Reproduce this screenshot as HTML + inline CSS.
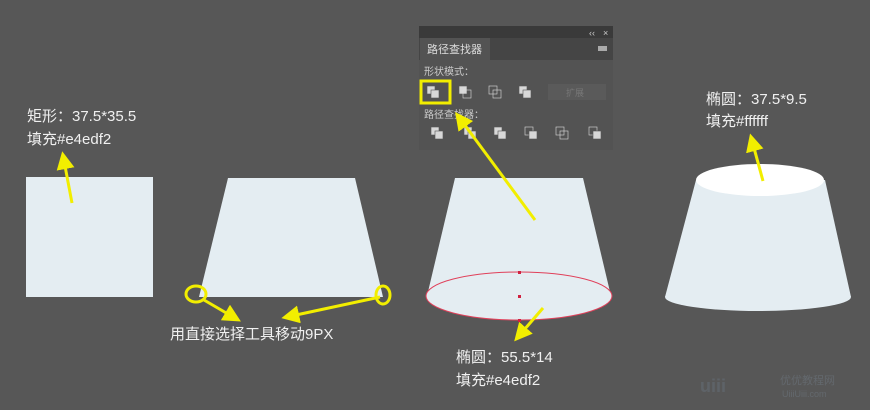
<!DOCTYPE html>
<html><head><meta charset="utf-8"><style>
html,body{margin:0;padding:0;background:#575757;width:870px;height:410px;overflow:hidden}
svg{display:block}
text{font-family:"Liberation Sans","Noto Sans CJK SC",sans-serif;fill:#f0f0f0;font-size:15px}
</style></head><body>
<svg width="870" height="410" viewBox="0 0 870 410">
<defs>
<marker id="ah" markerWidth="6" markerHeight="6" refX="1" refY="3" orient="auto" markerUnits="strokeWidth">
<path d="M0,0 L6,3 L0,6 Z" fill="#f2ee00"/></marker>
</defs>
<rect width="870" height="410" fill="#575757"/>
<rect x="26" y="177" width="127" height="120" fill="#e4edf2"/>
<polygon points="228,178 355,178 383,297 199,297" fill="#e4edf2"/>
<polygon points="455,178 583,178 611,296 427,296" fill="#e4edf2"/>
<ellipse cx="519" cy="296" rx="93" ry="24" fill="#e4edf2" stroke="#e0405a" stroke-width="1"/>
<rect x="518" y="271" width="3" height="3" fill="#d02040"/>
<rect x="518" y="295" width="3" height="3" fill="#d02040"/>
<rect x="518" y="319" width="3" height="3" fill="#d02040"/>
<polygon points="696,180 825,180 851,297 665,297" fill="#e4edf2"/>
<ellipse cx="758" cy="297" rx="93" ry="14" fill="#e4edf2"/>
<ellipse cx="760" cy="180" rx="64" ry="16" fill="#ffffff"/>
<rect x="419" y="26" width="194" height="124" fill="#535353"/>
<rect x="419" y="26" width="194" height="12" fill="#3a3a3a"/>
<rect x="419" y="38" width="194" height="22" fill="#454545"/>
<rect x="420" y="38" width="70" height="22" fill="#535353"/>
<text x="589" y="36" style="font-size:9px;fill:#ccc">‹‹</text>
<text x="603" y="36" style="font-size:9px;fill:#ccc">×</text>
<rect x="598" y="46" width="9" height="5" fill="#aaa"/>
<text x="427" y="53" style="font-size:11px;fill:#ddd">路径查找器</text>
<text x="424" y="75" style="font-size:10px;fill:#ccc">形状模式：</text>
<text x="424" y="118" style="font-size:10px;fill:#ccc">路径查找器：</text>
<rect x="548" y="84" width="58" height="16" fill="#5a5a5a"/>
<text x="566" y="96" style="font-size:9px;fill:#777">扩展</text>
<g fill="#d8d8d8" stroke="#555" stroke-width="0.6">
<rect x="427" y="86" width="8" height="8"/><rect x="431" y="90" width="8" height="8"/>
<rect x="459" y="86" width="8" height="8"/><rect x="463" y="90" width="8" height="8" fill="none" stroke="#ddd"/>
<rect x="489" y="86" width="8" height="8" fill="none" stroke="#ddd"/><rect x="493" y="90" width="8" height="8" fill="none" stroke="#ddd"/>
<rect x="519" y="86" width="8" height="8"/><rect x="523" y="90" width="8" height="8"/>
<rect x="431" y="127" width="8" height="8"/><rect x="435" y="131" width="8" height="8"/>
<rect x="464" y="127" width="8" height="8"/><rect x="468" y="131" width="8" height="8"/>
<rect x="494" y="127" width="8" height="8"/><rect x="498" y="131" width="8" height="8"/>
<rect x="525" y="127" width="8" height="8" fill="none" stroke="#ddd"/><rect x="529" y="131" width="8" height="8"/>
<rect x="556" y="127" width="8" height="8" fill="none" stroke="#ddd"/><rect x="560" y="131" width="8" height="8" fill="none" stroke="#ddd"/>
<rect x="589" y="127" width="8" height="8" fill="none" stroke="#ddd"/><rect x="593" y="131" width="8" height="8"/>
</g>
<rect x="421" y="81" width="29" height="22" fill="none" stroke="#f2ee00" stroke-width="3"/>
<g stroke="#f2ee00" stroke-width="3" fill="none">
<line x1="72" y1="203" x2="65" y2="166" marker-end="url(#ah)"/>
<line x1="204" y1="300" x2="228" y2="314" marker-end="url(#ah)"/>
<line x1="380" y1="297" x2="296" y2="315" marker-end="url(#ah)"/>
<line x1="535" y1="220" x2="464" y2="124" marker-end="url(#ah)"/>
<line x1="543" y1="308" x2="524" y2="330" marker-end="url(#ah)"/>
<line x1="763" y1="181" x2="754" y2="148" marker-end="url(#ah)"/>
<ellipse cx="196" cy="294" rx="10" ry="8"/>
<ellipse cx="383" cy="295" rx="7" ry="9"/>
</g>
<text x="27" y="121">矩形：37.5*35.5</text>
<text x="27" y="144">填充#e4edf2</text>
<text x="170" y="339">用直接选择工具移动9PX</text>
<text x="456" y="362">椭圆：55.5*14</text>
<text x="456" y="385">填充#e4edf2</text>
<text x="706" y="104">椭圆：37.5*9.5</text>
<text x="706" y="126">填充#ffffff</text>
<text x="700" y="392" style="font-size:18px;font-weight:bold;fill:#66707a;opacity:0.5">uiii</text>
<text x="780" y="384" style="font-size:11px;fill:#707a84;opacity:0.5">优优教程网</text>
<text x="782" y="397" style="font-size:9px;fill:#707a84;opacity:0.5">UiiiUiii.com</text>
</svg>
</body></html>
